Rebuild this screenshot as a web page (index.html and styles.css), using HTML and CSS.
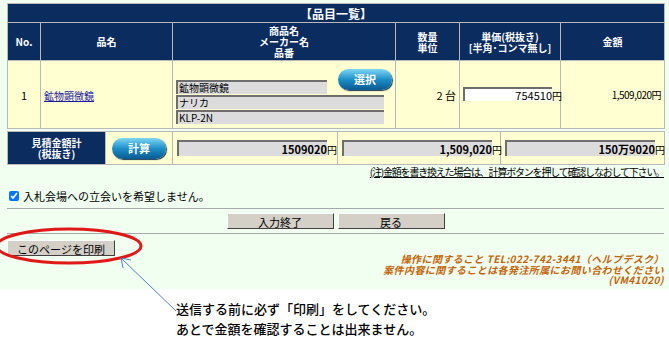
FILE: index.html
```html
<!DOCTYPE html>
<html lang="ja">
<head>
    <meta charset="UTF-8">
    <title>品目一覧</title>
    <link rel="stylesheet" href="styles.css">
</head>
<body>
    <div class="page">
        <table class="items">
            <colgroup>
                <col class="c-no">
                <col class="c-name">
                <col class="c-prod">
                <col class="c-qty">
                <col class="c-unit">
                <col class="c-amt">
            </colgroup>
            <tr>
                <th colspan="6" class="title">【品目一覧】</th>
            </tr>
            <tr class="head">
                <th>No.</th>
                <th>品名</th>
                <th>商品名<br>メーカー名<br>品番</th>
                <th>数量<br>単位</th>
                <th>単価(税抜き)<br>[半角･コンマ無し]</th>
                <th>金額</th>
            </tr>
            <tr class="row">
                <td class="center">1</td>
                <td><a href="#" class="item-link">鉱物顕微鏡</a></td>
                <td>
                    <div class="prod-top">
                        <span class="field short">鉱物顕微鏡</span>
                        <button class="pill">選択</button>
                    </div>
                    <span class="field">ナリカ</span>
                    <span class="field">KLP-2N</span>
                </td>
                <td class="right">2 台</td>
                <td class="unit-cell"><span class="price-input">754510</span>円</td>
                <td class="right small">1,509,020円</td>
            </tr>
        </table>

        <table class="totals">
            <colgroup>
                <col class="t-label">
                <col class="t-calc">
                <col class="t-sum1">
                <col class="t-sum2">
                <col class="t-sum3">
            </colgroup>
            <tr>
                <th class="total-label">見積金額計<br>(税抜き)</th>
                <td class="calc-cell"><button class="pill">計算</button></td>
                <td class="sum-cell"><span class="sum">1509020</span>円</td>
                <td class="sum-cell"><span class="sum wide">1,509,020</span>円</td>
                <td class="sum-cell"><span class="sum">150万9020</span>円</td>
            </tr>
        </table>

        <p class="note">(注)金額を書き換えた場合は、計算ボタンを押して確認しなおして下さい。</p>

        <label class="check"><input type="checkbox" checked> 入札会場への立会いを希望しません。</label>

        <div class="actions">
            <button class="btn">入力終了</button>
            <button class="btn">戻る</button>
        </div>

        <div class="print-row">
            <button class="btn print">このページを印刷</button>
        </div>

        <div class="contact">
            操作に関すること TEL:022-742-3441（ヘルプデスク）<br>
            案件内容に関することは各発注所属にお問い合わせください<br>
            (VM41020)
        </div>
    </div>

    <div class="memo">
        送信する前に必ず「印刷」をしてください。<br>
        あとで金額を確認することは出来ません。
    </div>

    <!-- 注釈（赤丸と矢印） -->
    <svg class="overlay" width="669" height="344" viewBox="0 0 669 344">
        <ellipse cx="69" cy="246" rx="72" ry="17" fill="none" stroke="#e01818" stroke-width="3"/>
        <line x1="176" y1="311" x2="122" y2="259" stroke="#4f81bd" stroke-width="1"/>
        <polyline points="123,268 121,258 131,260" fill="none" stroke="#4f81bd" stroke-width="1"/>
    </svg>
</body>
</html>
```

FILE: styles.css
```css
:root {
    --navy: #0b2c5f;
    --cream: #ffffd2;
    --mint: #f0fff0;
    --line: #b9b9b9;
}

* {
    margin: 0;
    padding: 0;
    box-sizing: border-box;
}

body {
    background-color: #fff;
    font-family: "Noto Sans CJK JP", "DejaVu Sans", sans-serif;
    font-size: 11px;
    color: #000;
    position: relative;
    width: 669px;
    height: 344px;
    overflow: hidden;
}

.page {
    background-color: var(--mint);
    height: 289px;
    padding: 3px 5px 0 7px;
}

table {
    border-collapse: collapse;
    width: 657px;
    table-layout: fixed;
}

th, td {
    border: 1px solid var(--line);
}

.items th {
    background-color: var(--navy);
    color: #fff;
    font-weight: bold;
    font-size: 10px;
    line-height: 11px;
}

.items th.title {
    height: 19px;
    font-size: 12px;
    text-align: center;
}

.head th {
    height: 38px;
}

.c-no { width: 33px; }
.c-name { width: 132px; }
.c-prod { width: 223px; }
.c-qty { width: 64px; }
.c-unit { width: 101px; }
.c-amt { width: 104px; }

.t-label { width: 98px; }
.t-calc { width: 67px; }
.t-sum1 { width: 165px; }
.t-sum2 { width: 163px; }
.t-sum3 { width: 164px; }

.row td {
    background-color: var(--cream);
    height: 68px;
    vertical-align: middle;
    padding: 0 3px;
}

.center { text-align: center; }
.right { text-align: right; }
.small { font-size: 10px; letter-spacing: -0.5px; }

.item-link {
    color: #1a1aa6;
    font-size: 10px;
}

.prod-top {
    display: flex;
    align-items: flex-end;
    justify-content: space-between;
    padding-top: 3px;
}

.field {
    display: block;
    width: 208px;
    height: 14px;
    background-color: #dcdcdc;
    border-top: 2px solid #6e6e6e;
    border-left: 2px solid #6e6e6e;
    font-size: 10px;
    line-height: 12px;
    padding-left: 1px;
    margin-top: 1px;
}

.field.short {
    width: 151px;
}

.pill {
    width: 54px;
    height: 21px;
    border: none;
    border-radius: 11px;
    background: linear-gradient(#7fd6f4, #1d8fc9 50%, #0a5a90);
    box-shadow: 1px 1px 1px #1c3c58;
    color: #fff;
    font-family: inherit;
    font-size: 11px;
    font-weight: bold;
    margin-bottom: 4px;
}

.unit-cell {
    font-size: 10px;
    white-space: nowrap;
}

.price-input {
    display: inline-block;
    width: 89px;
    height: 14px;
    background-color: #fff;
    border-top: 2px solid #6e6e6e;
    border-left: 2px solid #6e6e6e;
    text-align: right;
    font-size: 11px;
    line-height: 12px;
}

.totals {
    margin-top: 2px;
}

.totals td, .totals th {
    height: 33px;
}

.total-label {
    background-color: var(--navy);
    color: #fff;
    font-size: 10px;
    line-height: 11px;
}

.calc-cell {
    background-color: var(--cream);
    text-align: center;
}

.calc-cell .pill {
    margin: 0;
}

.sum-cell {
    background-color: var(--cream);
    padding-left: 4px;
    font-size: 10px;
    white-space: nowrap;
}

.sum {
    display: inline-block;
    width: 150px;
    height: 16px;
    background-color: #dcdcdc;
    border-top: 2px solid #6e6e6e;
    border-left: 2px solid #6e6e6e;
    text-align: right;
    font-weight: bold;
    font-size: 11px;
    line-height: 14px;
}

.note {
    text-align: right;
    font-size: 10px;
    text-decoration: underline;
    letter-spacing: -1.2px;
    line-height: 14px;
}

.check {
    display: flex;
    align-items: center;
    gap: 4px;
    margin-top: 10px;
    padding-left: 2px;
    font-size: 11px;
    height: 14px;
}

.check input {
    width: 10px;
    height: 10px;
}

.actions {
    display: flex;
    justify-content: center;
    gap: 4px;
    margin-top: 5px;
    padding: 4px 0;
    border-top: 1px solid #a8a8a8;
    border-bottom: 1px solid #a8a8a8;
}

.btn {
    width: 107px;
    height: 16px;
    background-color: #d4d0c8;
    border: 1px solid;
    border-color: #fff #404040 #404040 #fff;
    font-family: inherit;
    font-size: 11px;
    color: #000;
}

.print-row {
    padding-top: 6px;
}

.btn.print {
    width: 108px;
    height: 16px;
}

.contact {
    text-align: right;
    color: #c4640a;
    font-style: italic;
    font-weight: bold;
    font-size: 10px;
    line-height: 10.5px;
    letter-spacing: 0.4px;
    margin-top: -3px;
}

.memo {
    padding: 10px 0 0 176px;
    font-size: 13px;
    line-height: 20px;
    font-weight: 500;
}

.overlay {
    position: absolute;
    left: 0;
    top: 0;
    pointer-events: none;
}
```
